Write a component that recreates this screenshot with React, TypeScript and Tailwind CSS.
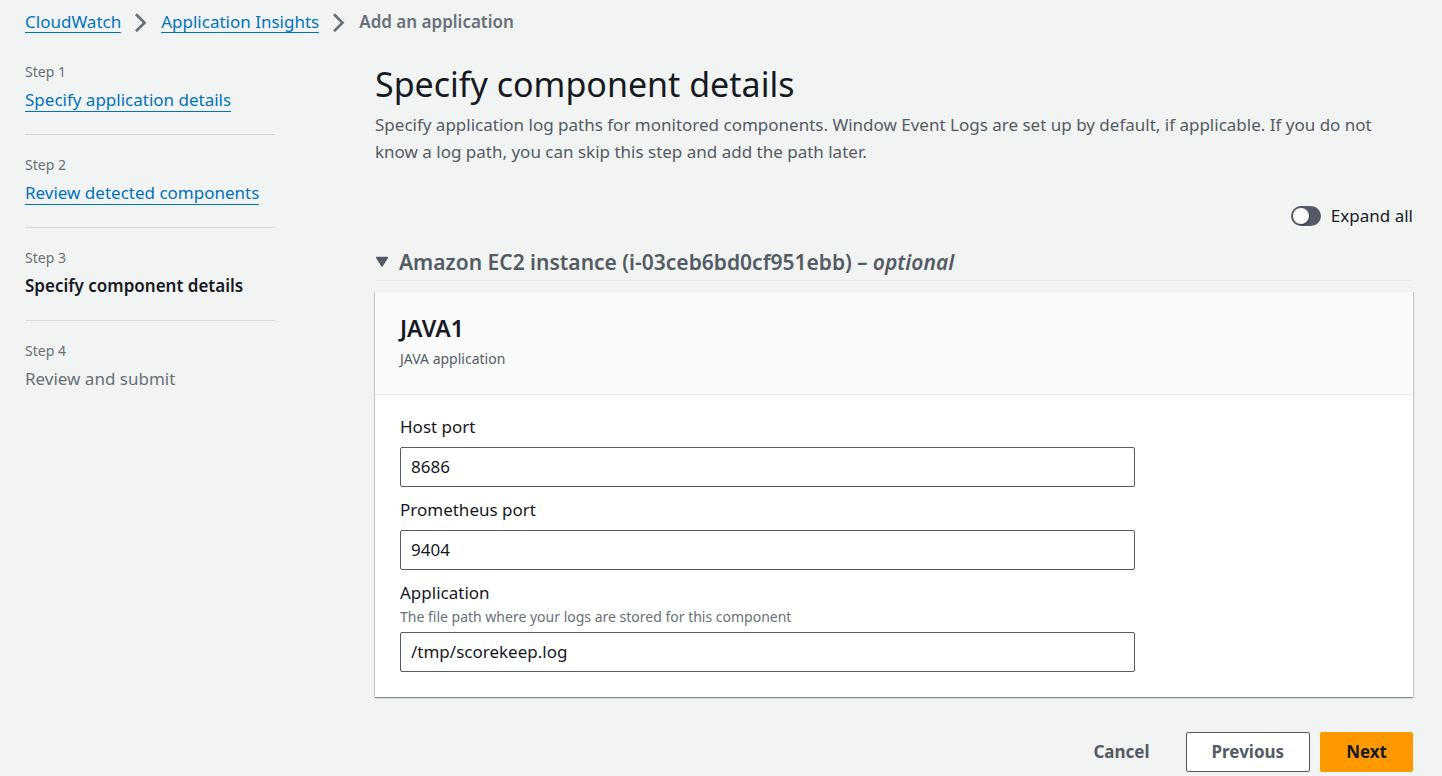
import { useId, useState } from "react";

const steps = [
  { title: "Specify application details", state: "done" },
  { title: "Review detected components", state: "done" },
  { title: "Specify component details", state: "current" },
  { title: "Review and submit", state: "upcoming" },
];

function Separator() {
  return (
    <svg className="mx-3 h-5 w-4 shrink-0" viewBox="0 0 16 20" fill="none" stroke="#687078" strokeWidth="2.7" aria-hidden="true">
      <path d="M3 2.2 11.5 10.7 3 19.2" />
    </svg>
  );
}

function TextLink({ children }: { children: string }) {
  return (
    <a href="#" className="border-b border-[#0073bb] text-[#0073bb]">
      {children}
    </a>
  );
}

function StepTitle({ title, state }: { title: string; state: string }) {
  if (state === "done") return <TextLink>{title}</TextLink>;
  if (state === "current") return <span className="font-semibold text-[#16191f]">{title}</span>;
  return <span className="text-[#687078]">{title}</span>;
}

function Field({ label, hint, initial }: { label: string; hint?: string; initial: string }) {
  const id = useId();
  const [value, setValue] = useState(initial);
  return (
    <div className="flex flex-col">
      <label htmlFor={id} className="leading-7">
        {label}
      </label>
      {hint && <p className="text-sm leading-5 text-[#687078]">{hint}</p>}
      <input
        id={id}
        value={value}
        onChange={(e) => setValue(e.target.value)}
        className={`${hint ? "mt-[5px]" : "mt-[6px]"} h-10 w-full rounded-xs border border-[#545b64] bg-white px-[10px] pb-[2px] text-[#16191f]`}
      />
    </div>
  );
}

export default function App() {
  const [expanded, setExpanded] = useState(false);
  const [open, setOpen] = useState(true);

  return (
    <div className="min-h-screen bg-[#f2f3f3] pt-2 pr-[29px] pb-1 pl-[25px] font-['Noto_Sans',sans-serif] text-[17px] text-[#16191f]">
      <nav aria-label="Breadcrumb" className="flex h-7 items-center leading-5">
        <TextLink>CloudWatch</TextLink>
        <Separator />
        <TextLink>Application Insights</TextLink>
        <Separator />
        <span className="font-semibold text-[#687078]">Add an application</span>
      </nav>

      <div className="mt-[26px] flex items-start gap-[100px]">
        <ol className="w-[250px] shrink-0">
          {steps.map((step, i) => (
            <li key={step.title} className="border-b border-[#d5dbdb] py-5 first:pt-0 last:border-0">
              <p className="text-sm leading-5 text-[#687078]">Step {i + 1}</p>
              <p className="mt-1 leading-7 whitespace-nowrap">
                <StepTitle title={step.title} state={step.state} />
              </p>
            </li>
          ))}
        </ol>

        <main className="min-w-0 flex-1">
          <h1 className="text-[34px] leading-[44px]">Specify component details</h1>
          <p className="mt-[5px] leading-[27px] text-[#545b64]">
            Specify application log paths for monitored components. Window Event Logs are set up by default, if applicable. If you do not know a log path, you can skip this step and add the path later.
          </p>

          <div className="mt-[37px] flex justify-end">
            <label className="flex items-center gap-[10px] leading-7">
              <input
                type="checkbox"
                role="switch"
                checked={expanded}
                onChange={(e) => setExpanded(e.target.checked)}
                className="peer sr-only"
              />
              <span className="flex h-5 w-[30px] items-center rounded-full bg-[#545b64] px-[2px] peer-checked:justify-end peer-checked:bg-[#0073bb]">
                <span className="size-4 rounded-full bg-white shadow-[1px_1px_1px_rgba(0,0,0,0.3)]" />
              </span>
              Expand all
            </label>
          </div>

          <h2 className="mt-[18px] border-b border-[#eaeded] pb-1">
            <button
              type="button"
              aria-expanded={open}
              onClick={() => setOpen(!open)}
              className="flex items-center gap-[10px] text-[21px] leading-7 font-semibold text-[#545b64]"
            >
              <svg className="w-[14px] shrink-0" viewBox="0 0 14 12" fill="#545b64" stroke="#545b64" strokeWidth="1.5" strokeLinejoin="round" aria-hidden="true">
                <path d="M1.7 1.5h10.6L7 10z" />
              </svg>
              <span>
                Amazon EC2 instance (i-03ceb6bd0cf951ebb) <em>– optional</em>
              </span>
            </button>
          </h2>

          {open && (
            <section className="mt-[10px] border-t border-[#eaeded] bg-white shadow-[0_1px_1px_0_rgba(0,28,36,0.3),1px_1px_1px_0_rgba(0,28,36,0.15),-1px_1px_1px_0_rgba(0,28,36,0.15)]">
              <header className="border-b border-[#eaeded] bg-[#fafafa] px-[25px] pt-5 pb-[25px]">
                <h3 className="text-[23px] leading-8 font-semibold">JAVA1</h3>
                <p className="mt-[5px] text-sm leading-5 text-[#545b64]">JAVA application</p>
              </header>
              <div className="px-[25px] pt-[18px] pb-[25px]">
                <div className="flex max-w-[735px] flex-col gap-[9px]">
                  <Field label="Host port" initial="8686" />
                  <Field label="Prometheus port" initial="9404" />
                  <Field label="Application" hint="The file path where your logs are stored for this component" initial="/tmp/scorekeep.log" />
                </div>
              </div>
            </section>
          )}

          <div className="mt-[35px] flex justify-end gap-[10px] font-bold">
            <button type="button" className="h-10 px-[26px] text-[#545b64]">
              Cancel
            </button>
            <button type="button" className="h-10 rounded-xs border border-[#545b64] bg-white px-[25px] text-[#545b64]">
              Previous
            </button>
            <button type="button" className="h-10 rounded-xs bg-[#ff9900] px-[26px]">
              Next
            </button>
          </div>
        </main>
      </div>
    </div>
  );
}
